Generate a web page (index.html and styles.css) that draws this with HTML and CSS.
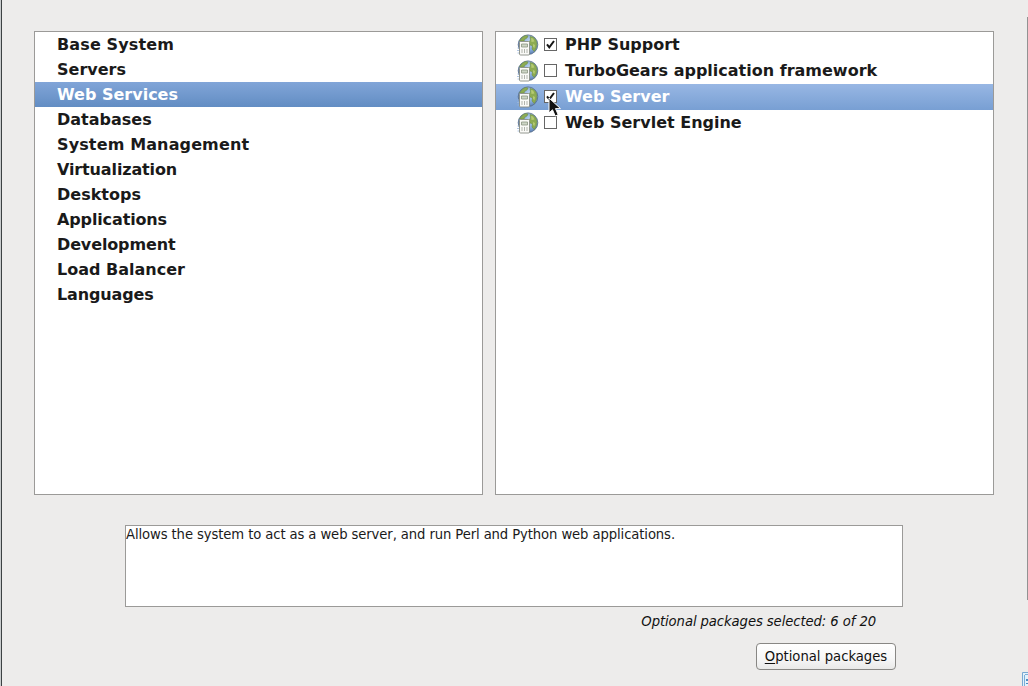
FILE: index.html
```html
<!DOCTYPE html>
<html lang="en">
<head>
<meta charset="utf-8">
<title>Package selection</title>
<link rel="stylesheet" href="styles.css">
</head>
<body>
<svg class="defs" width="0" height="0" aria-hidden="true">
  <defs>
    <radialGradient id="sea" cx="60%" cy="35%" r="75%"><stop offset="0" stop-color="#c3d8f2"/><stop offset=".55" stop-color="#86a9da"/><stop offset="1" stop-color="#45689a"/></radialGradient>
    <symbol id="globe" viewBox="0 0 22 22">
      <circle cx="11" cy="10.700" r="9.800" fill="url(#sea)" stroke="#586c86" stroke-width=".8"/>
      <path d="M2.500 7 5.500 3l3-1.500 2.500.5-1 2-2 1-1 2H2.500zM13 2.500l3 .5 3 3 1 4-.8 4-2 3.500-2.200-2.500.5-3-2.500-1-1-3 1.500-2z" fill="#8dab52" stroke="#678b3e" stroke-width=".5"/>
      <path d="M14 4l2 .5 1.500 3-3 .5zM16 10l2 1-.5 3-1.500-1z" fill="#b5ca72"/>
      <path d="M.5 14h2M0 16.500h2.500M.5 19h2" stroke="#9db8da" stroke-width=".8"/>
      <rect x="2.500" y="7.500" width="10" height="13.500" rx="1" fill="#fafaf7" stroke="#898d83" stroke-width=".9"/>
      <path d="M4.500 10h6v3h-6z" fill="#cdd5c5" stroke="#8b9682" stroke-width=".8"/>
      <path d="M5 15v4M7.500 15v4M10 15v4" stroke="#b1b4ac"/>
    </symbol>
    <symbol id="check" viewBox="0 0 13 13">
      <path d="M3 6.400 5.300 9.400 10 3" fill="none" stroke="#151515" stroke-width="2"/>
    </symbol>
  </defs>
</svg>
<main class="window">
  <div class="lists">
    <ul class="panel categories">
      <li class="wide">Base System</li>
      <li>Servers</li>
      <li class="selected">Web Services</li>
      <li>Databases</li>
      <li class="wide">System Management</li>
      <li class="narrow">Virtualization</li>
      <li>Desktops</li>
      <li class="narrow">Applications</li>
      <li class="narrow">Development</li>
      <li>Load Balancer</li>
      <li class="narrow">Languages</li>
    </ul>
    <ul class="panel groups">
      <li><svg class="globe"><use href="#globe"/></svg><span class="box"><svg class="tick"><use href="#check"/></svg></span><span>PHP Support</span></li>
      <li><svg class="globe"><use href="#globe"/></svg><span class="box"></span><span>TurboGears application framework</span></li>
      <li class="selected"><svg class="globe"><use href="#globe"/></svg><span class="box"><svg class="tick"><use href="#check"/></svg></span><span>Web Server</span></li>
      <li><svg class="globe"><use href="#globe"/></svg><span class="box"></span><span>Web Servlet Engine</span></li>
    </ul>
  </div>
  <div class="details">
    <div class="description"><span>Allows the system to act as a web server, and run Perl and Python web applications.</span></div>
    <p class="count">Optional packages selected: 6 of 20</p>
    <button class="optional"><span><u>O</u>ptional packages</span></button>
  </div>
  <div class="edge-right"></div>
  <svg class="corner" viewBox="0 0 6 14"><path d="M1 1h5v13H1z" fill="#e4f2fa"/><path d="M6 .5H.5V14" fill="none" stroke="#78a9d2"/><path d="M3 2.500h3M2.500 3v11" stroke="#7baed8"/><path d="M4 7h2v2H4zM4 11h2v1H4z" fill="#4b8cc4"/></svg>
  <svg class="cursor" viewBox="0 0 14 21"><path d="M1 1v15l3.500-3.200 2.700 6.200 3-1.300-2.700-6.100h5z" fill="#111" stroke="#fff"/></svg>
</main>
</body>
</html>
```
FILE: styles.css
```css
* { box-sizing: border-box; }
body { margin: 0; overflow: hidden; background: #edeceb; font-family: "DejaVu Sans", sans-serif; color: #1a1a1a; }
.defs { position: absolute; }
.window { position: relative; width: 1028px; height: 686px; padding: 31px 34px 0 32px; border-left: 1px solid #c9cccd; background: linear-gradient(90deg, #3d4244 1px, #edeceb 1px); }
.lists { display: flex; gap: 12px; height: 464px; margin-left: 1px; }
.panel { margin: 0; padding: 0; list-style: none; background: #fff; border: 1px solid #9b9a98; font-size: 16px; font-weight: bold; white-space: nowrap; }
.categories { width: 449px; }
.groups { width: 499px; }
.categories li { height: 25px; padding-left: 22px; line-height: 25px; }
.categories .wide { letter-spacing: .13px; }
.categories .narrow { letter-spacing: -.13px; }
.groups li { display: flex; align-items: flex-start; height: 26px; padding-left: 21px; line-height: 26px; }
.selected { color: #fff; background: linear-gradient(#81a5d8, #628dc3); }
.groups .selected { background: linear-gradient(#98b7e4, #789fd3); }
.globe { width: 22px; height: 22px; margin: 2px 5px 0 0; }
.box { width: 13px; height: 13px; margin: 6px 8px 0 0; background: #fff; border: 1px solid #666; }
.tick { display: block; width: 13px; height: 13px; margin: -1px; }
.details { display: flex; flex-direction: column; align-items: flex-end; width: 778px; margin: 30px 0 0 92px; font-family: "DejaVu Sans Condensed", "DejaVu Sans", sans-serif; font-stretch: condensed; font-size: 14.67px; }
.description { width: 778px; height: 82px; background: #fff; border: 1px solid #9b9a98; line-height: 15px; letter-spacing: -.1px; white-space: nowrap; }
.count { margin: 4px 27px 0 0; line-height: 19px; font-style: italic; letter-spacing: -.08px; color: #111; }
.optional { width: 140px; height: 27px; margin: 13px 7px 0 0; padding: 0 0 2px; border: 1px solid #888784; border-radius: 4px; background: linear-gradient(#fff, #f8f8f8 55%, #e9e9e8); font: inherit; color: #111; white-space: nowrap; }
.optional u { text-underline-offset: 2px; }
.edge-right { position: absolute; top: 17px; right: 0; width: 1px; height: 583px; background: #929292; }
.corner { position: absolute; right: 0; bottom: 0; width: 6px; height: 14px; }
.cursor { position: absolute; left: 547px; top: 97px; width: 14px; height: 21px; }
```
